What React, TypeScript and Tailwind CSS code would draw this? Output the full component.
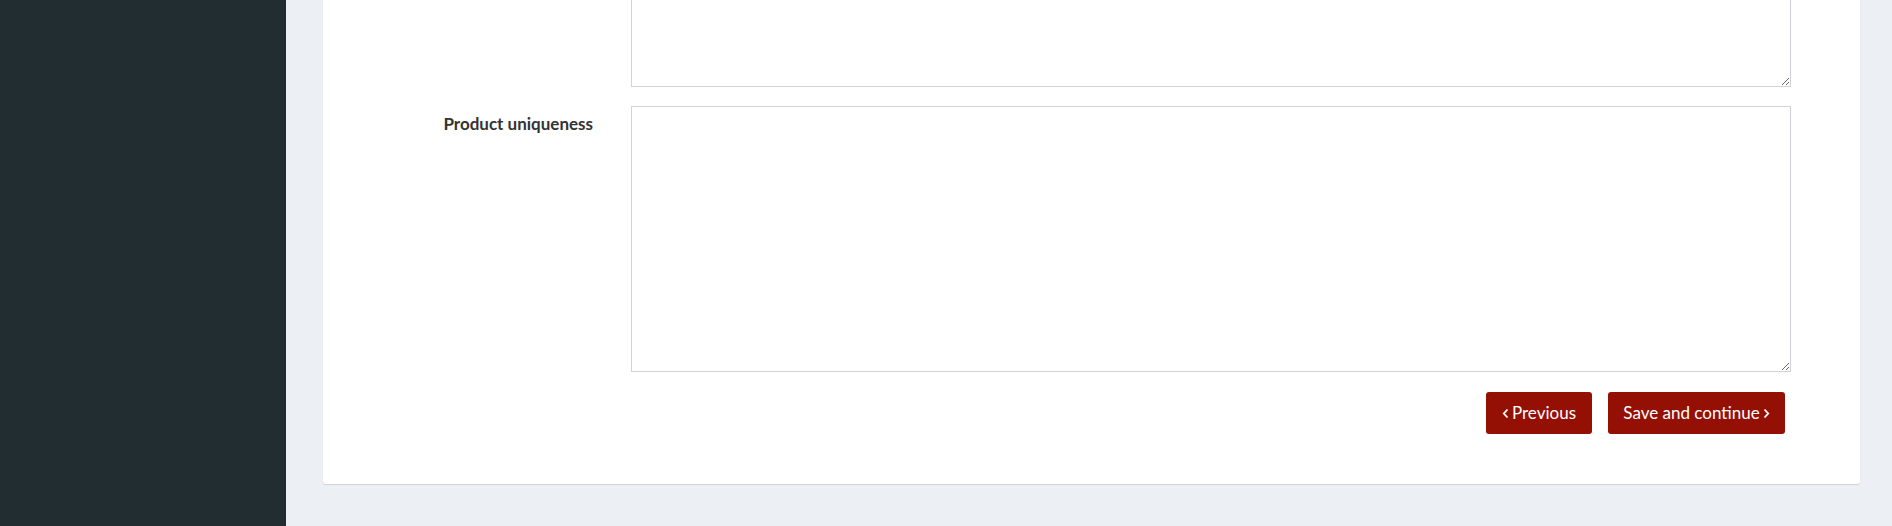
import React from 'react';

const ChevronLeft = () => (
  <svg width="7" height="11" viewBox="0 0 7 11" className="mr-[3px]">
    <polyline points="5.5,1.5 1.8,5.5 5.5,9.5" fill="none" stroke="currentColor" strokeWidth="1.8" />
  </svg>
);

const ChevronRight = () => (
  <svg width="7" height="11" viewBox="0 0 7 11" className="ml-[3px]">
    <polyline points="1.5,1.5 5.2,5.5 1.5,9.5" fill="none" stroke="currentColor" strokeWidth="1.8" />
  </svg>
);

const App: React.FC = () => {
  return (
    <div className="flex h-[526px] overflow-hidden bg-[#ecf0f5] font-['Lato',sans-serif] text-[#333]">
      <aside className="w-[286px] shrink-0 bg-[#222d32]" />

      <main className="flex flex-1 flex-col justify-end pl-[37px] pr-[32px] pb-[42px]">
        <div className="shrink-0 rounded-[3px] bg-white pr-[69px] pb-[50px] shadow-[0_1px_1px_rgba(0,0,0,0.12)]">
          <div className="grid grid-cols-[308px_1fr]">
            <div />
            <textarea className="h-[160px] w-full border border-[#d2d2dc] bg-white outline-none" />
          </div>

          <div className="mt-[19px] grid grid-cols-[308px_1fr]">
            <label className="pr-[38px] pt-[6px] text-right text-[17px] font-bold leading-6">
              Product uniqueness
            </label>
            <textarea className="h-[266px] w-full border border-[#d2d2dc] bg-white outline-none" />
          </div>

          <div className="mt-[20px] flex justify-end gap-4 pr-[6px]">
            <button className="flex h-[42px] w-[106px] items-center justify-center rounded-[3px] bg-[#941004] text-[17px] text-white">
              <ChevronLeft />
              Previous
            </button>
            <button className="flex h-[42px] w-[177px] items-center justify-center rounded-[3px] bg-[#941004] text-[17px] text-white">
              Save and continue
              <ChevronRight />
            </button>
          </div>
        </div>
      </main>
    </div>
  );
};

export default App;
